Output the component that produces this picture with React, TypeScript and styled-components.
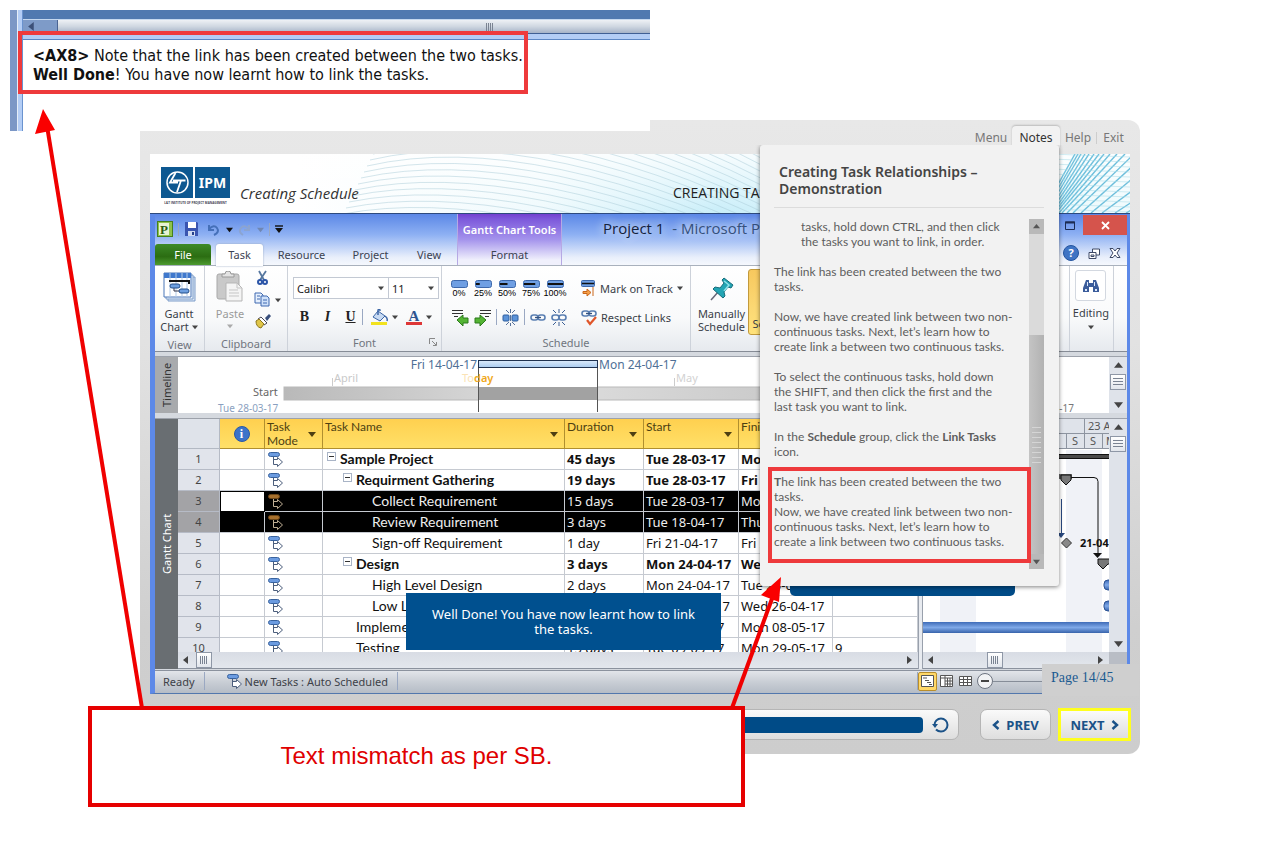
import React from "react";
import styled, { createGlobalStyle, css } from "styled-components";

const ui = '"Noto Sans", "Open Sans", sans-serif';
const office = 'Lato, "Open Sans", sans-serif';
const navy = "#004b87";

const Global = createGlobalStyle`
  *, *::before, *::after { box-sizing: border-box; }
  body { margin: 0; background: #fff; font-family: ${ui}; color: #333; }
  button, select, input { font: inherit; color: inherit; margin: 0; }
  button { border: 0; padding: 0; background: none; cursor: pointer; }
  p, h1, h2 { margin: 0; }
  svg { display: block; flex: none; }
`;

/* ---------- page and storyboard clip ---------- */

const Page = styled.main`
  position: relative;
  min-width: 1280px;
  padding: 10px 0 55px;
`;

const Clip = styled.section`
  position: relative;
  z-index: 1;
  width: 640px;
  height: 121px;
  margin-left: 10px;
  display: flex;
  background: #fff;
`;

const ClipEdge = styled.div`
  width: 13px;
  border-left: 7px solid #7b97c6;
  border-right: 1px solid #6a93cf;
  background: linear-gradient(90deg, #e4edf8 1px, #b3cdf5 1px);
`;

const ClipBody = styled.div`
  flex: 1;
  display: flex;
  flex-direction: column;
`;

const ClipTop = styled.div`
  height: 10px;
  background: #5079b0;
  border-bottom: 1px solid #c5d8ef;
`;

const ClipScroll = styled.div`
  height: 14px;
  display: flex;
  background: #7e9bc8;
  border-bottom: 1px solid #3f5f94;
`;

const ClipArrow = styled.div`
  width: 34px;
  display: flex;
  align-items: center;
  padding-left: 4px;
`;

const ClipThumb = styled.div`
  flex: 1;
  display: flex;
  align-items: center;
  padding-left: 427px;
  border-left: 1px solid #4a6493;
  background: linear-gradient(#eef1f5, #cfd7e1 50%, #a5b3c7);
`;

const ClipBand = styled.div`
  height: 6px;
  background: #b3cdf5;
  border-bottom: 1px solid #5b86c4;
`;

const ClipText = styled.p`
  padding: 6px 0 0 10px;
  font: 16px/19px "DejaVu Sans Condensed", "Noto Sans", sans-serif;
  color: #111;
  white-space: nowrap;
`;

/* ---------- player ---------- */

const Player = styled.section`
  position: relative;
  margin: -11px 140px 0;
  padding: 0 10px 13px;
  border-radius: 0 12px 12px 0;
  background: linear-gradient(#e8e8e8, #e2e2e2 35%, #cfcfcf 80%, #cdcdcd);
`;

const PlayerNav = styled.nav`
  height: 34px;
  padding-top: 6px;
  display: flex;
  justify-content: flex-end;
`;

const NavTab = styled.button<{ $w: number; $on?: boolean }>`
  height: 22px;
  padding: 2px 0 0;
  width: ${(p) => p.$w}px;
  font-size: 12px;
  line-height: 20px;
  color: ${(p) => (p.$on ? "#333" : "#777")};
  ${(p) =>
    p.$on &&
    css`
      border-radius: 4px 4px 0 0;
      background: #f2f2f2;
      box-shadow: 0 -1px 2px rgba(0, 0, 0, 0.2);
    `}
`;

const NavRule = styled.span`
  width: 1px;
  height: 12px;
  margin-top: 6px;
  background: #cdcdcd;
`;

const Banner = styled.header`
  display: grid;
  height: 60px;
  background: #fff;
  border-bottom: 1px solid #2d4a7e;
  > * {
    grid-area: 1 / 1;
  }
`;

const BannerRow = styled.div`
  display: flex;
  align-items: flex-start;
  padding: 13px 0 0 11px;
`;

const CourseName = styled.p`
  width: 443px;
  padding: 16px 0 0 10px;
  font: italic 15px/20px "Open Sans", sans-serif;
  color: #333;
  white-space: nowrap;
`;

const TopicName = styled.p`
  padding-top: 16px;
  font: 14px/20px "Open Sans", sans-serif;
  color: #222;
  white-space: nowrap;
`;

/* ---------- application window ---------- */

const AppWindow = styled.section`
  border: solid #5d89e8;
  border-width: 0 3px 0 5px;
  font-size: 11px;
  background: #d5d9df;
  border-bottom: 1px solid #5277ad;
`;

const Caption = styled.div`
  display: flex;
  height: 52px;
  background: linear-gradient(#5b87e6, #8db0f3 40%, #e9effb 85%, #f5f8fd);
  border-bottom: 1px solid #a9b1bd;
`;

const CaptionLeft = styled.div`
  width: 302px;
`;

const QuickBar = styled.div`
  display: flex;
  align-items: center;
  gap: 5px;
  height: 30px;
  padding-left: 2px;
`;

const VRule = styled.span<{ $h: number }>`
  width: 1px;
  flex: none;
  height: ${(p) => p.$h}px;
  background: #9aa8c2;
`;

const TabRow = styled.div`
  display: flex;
  height: 22px;
`;

const RibbonTab = styled.button<{ $w: number; $kind?: "file" | "open" }>`
  width: ${(p) => p.$w}px;
  height: 21px;
  padding-bottom: 1px;
  font-size: 11px;
  color: #3c4352;
  ${(p) =>
    p.$kind === "file" &&
    css`
      margin-right: 5px;
      color: #fff;
      border-radius: 3px 3px 0 0;
      background: linear-gradient(#3d8a28, #2b6d12 60%, #4d9a30);
    `}
  ${(p) =>
    p.$kind === "open" &&
    css`
      border-radius: 3px 3px 0 0;
      height: 22px;
      padding-bottom: 2px;
      background: #fff;
      box-shadow: 0 0 2px #8b9cbc;
    `}
`;

const ToolTabs = styled.div`
  width: 105px;
  display: flex;
  flex-direction: column;
  border: solid #b6a9e4;
  border-width: 0 1px;
  background: linear-gradient(#7340d0, #7d59db 10%, #a493ec 50%, #f0f0fc 90%);
`;

const ToolTitle = styled.span`
  height: 30px;
  padding-top: 1px;
  font: 600 11px/30px ${ui};
  color: #fff;
  text-align: center;
  white-space: nowrap;
`;

const DocTitle = styled.h1`
  flex: 1;
  padding-left: 41px;
  font: 15px/28px "Open Sans", sans-serif;
  color: #35507c;
  white-space: nowrap;
  text-shadow: 0 0 8px #e3edff, 0 0 12px #e3edff;
  b {
    font-weight: 400;
    color: #14223c;
  }
`;

const WinControls = styled.div`
  display: flex;
  flex-direction: column;
  align-items: flex-end;
`;

const WinRow = styled.div<{ $gap: number; $pad: number }>`
  display: flex;
  align-items: center;
  gap: ${(p) => p.$gap}px;
  padding-right: ${(p) => p.$pad}px;
  margin-top: 1px;
`;

const CloseBtn = styled.button`
  width: 44px;
  height: 20px;
  display: grid;
  place-items: center;
  background: #d5544c;
`;

const HelpBtn = styled.button`
  width: 16px;
  height: 16px;
  margin-top: 9px;
  border-radius: 50%;
  font: 700 11px/14px "Open Sans", sans-serif;
  color: #fff;
  background: #3f74c4;
  border: 1px solid #24559f;
`;

const GlyphBtn = styled.button`
  margin-top: 9px;
`;

/* ---------- ribbon ---------- */

const Ribbon = styled.div`
  display: flex;
  height: 86px;
  padding-right: 13px;
  background: linear-gradient(#fff, #f9fafb 60%, #e6e9ee);
  border-bottom: 1px solid #868c96;
`;

const Group = styled.div<{ $w?: number }>`
  ${(p) => (p.$w ? `width: ${p.$w}px;` : "flex: 1;")}
  display: flex;
  flex-direction: column;
  border-right: 1px solid #cdd2da;
  overflow: hidden;
`;

const GroupBody = styled.div<{ $pad?: string; $gap?: number }>`
  flex: 1;
  display: flex;
  gap: ${(p) => p.$gap ?? 0}px;
  padding: ${(p) => p.$pad ?? "4px 4px 0"};
`;

const GroupName = styled.div`
  height: 18px;
  display: grid;
  grid-template-columns: 12px 1fr 12px;
  align-items: center;
  text-align: center;
  color: #70757e;
`;

const BigButton = styled.button<{ $on?: boolean; $dim?: boolean; $w?: number }>`
  display: flex;
  flex-direction: column;
  align-items: center;
  width: ${(p) => p.$w ?? 42}px;
  height: 66px;
  flex: none;
  font-size: 11px;
  line-height: 13px;
  color: ${(p) => (p.$dim ? "#9a9a9a" : "#3a3f48")};
  border: 1px solid ${(p) => (p.$on ? "#c29a3c" : "transparent")};
  border-radius: 3px;
  background: ${(p) => (p.$on ? "linear-gradient(#f7c85e, #fbd874 60%, #ffe27a)" : "none")};
  span {
    margin-top: 5px;
  }
`;

const Column = styled.div<{ $gap?: number; $center?: boolean }>`
  display: flex;
  flex-direction: column;
  gap: ${(p) => p.$gap ?? 0}px;
  ${(p) => p.$center && "align-items: center;"}
`;

const Row = styled.div<{ $gap?: number; $h?: number }>`
  display: flex;
  align-items: center;
  gap: ${(p) => p.$gap ?? 0}px;
  ${(p) => p.$h && `height: ${p.$h}px;`}
`;

const Tool = styled.button`
  display: flex;
  align-items: center;
  gap: 4px;
  color: #3a3f48;
  white-space: nowrap;
`;

const PickWrap = styled.label<{ $w: number }>`
  width: ${(p) => p.$w}px;
  display: grid;
  align-items: center;
  margin-right: -1px;
  > * {
    grid-area: 1 / 1;
  }
  svg {
    justify-self: end;
    margin-right: 5px;
    pointer-events: none;
  }
`;

const Pick = styled.select`
  appearance: none;
  width: 100%;
  height: 22px;
  padding: 0 3px;
  border: 1px solid #c3c9d3;
  border-radius: 0;
  background: #fff;
  font-size: 11px;
  color: #222;
`;

const Letter = styled.button<{ $as: "b" | "i" | "u" }>`
  width: 23px;
  font: 700 14px/18px "Liberation Serif", serif;
  color: #222;
  font-style: ${(p) => (p.$as === "i" ? "italic" : "normal")};
  text-decoration: ${(p) => (p.$as === "u" ? "underline" : "none")};
`;

const Percent = styled.button`
  width: 24px;
  display: flex;
  flex-direction: column;
  align-items: center;
  font: 9px/8px "Liberation Sans", sans-serif;
  color: #000;
`;

const FindBtn = styled.button`
  width: 31px;
  height: 31px;
  display: grid;
  place-items: center;
  border: 1px solid #d3d8e0;
  border-radius: 3px;
  background: #fff;
`;

const Editing = styled.button`
  display: flex;
  flex-direction: column;
  align-items: center;
  gap: 4px;
  font-size: 11px;
  line-height: 15px;
  color: #3a3f48;
`;

/* ---------- timeline and grid ---------- */

const Pane = styled.div<{ $h: number; $top: number }>`
  display: flex;
  height: ${(p) => p.$h}px;
  margin-top: ${(p) => p.$top}px;
  border-top: 1px solid #9da2ab;
  background: #fff;
  overflow: hidden;
`;

const SideLabel = styled.div<{ $dark?: boolean }>`
  width: 23px;
  display: grid;
  place-items: center;
  writing-mode: vertical-rl;
  transform: rotate(180deg);
  font-size: 11px;
  color: ${(p) => (p.$dark ? "#fff" : "#333")};
  background: ${(p) => (p.$dark ? "#696e72" : "#a8aaad")};
`;

const Fill = styled.div`
  flex: 1;
  min-width: 0;
  overflow: hidden;
`;

const VScroll = styled.div<{ $fill?: boolean }>`
  width: 18px;
  ${(p) => p.$fill && "flex: 1;"}
  display: flex;
  flex-direction: column;
  align-items: center;
  padding: 4px 0;
  background: #dfe3ea;
`;

const Grow = styled.span`
  flex: 1;
`;

const Thumb = styled.button<{ $vertical?: boolean }>`
  width: 16px;
  height: 16px;
  display: grid;
  place-items: center;
  border: 1px solid #8e97a6;
  background: linear-gradient(#fff, #e2e6ec);
  margin-top: ${(p) => (p.$vertical ? 4 : 0)}px;
  flex: none;
`;

const HScroll = styled.div<{ $gap: number }>`
  height: 17px;
  display: flex;
  align-items: center;
  padding: 0 5px 0 4px;
  background: linear-gradient(#d8dce4, #e3e7ed);
  border-bottom: 1px solid #8b929e;
  > ${Thumb} {
    margin-left: ${(p) => p.$gap}px;
  }
`;

const SheetPane = styled.div`
  width: 740px;
  display: flex;
  flex-direction: column;
`;

const SheetClip = styled.div`
  height: 233px;
  overflow: hidden;
`;

const Sheet = styled.table`
  width: 740px;
  table-layout: fixed;
  border-collapse: separate;
  border-spacing: 0;
  font: 14px/20px ${office};
  color: #111;
`;

const HeadCell = styled.th<{ $blank?: boolean }>`
  height: 30px;
  padding: 1px 3px 0 2px;
  vertical-align: top;
  text-align: left;
  font: 12px/14px ${office};
  color: #4d3f12;
  white-space: nowrap;
  overflow: hidden;
  border: solid #b08f2f;
  border-width: 0 1px 1px 0;
  background: linear-gradient(#ffd04f, #ffe068);
  ${(p) => p.$blank && "background: #dfe3ea; border-color: #b3b9c3;"}
`;

const HeadInner = styled.div`
  display: flex;
  justify-content: space-between;
  svg {
    margin: 10px 3px 0 0;
  }
`;

const InfoDot = styled.span`
  display: block;
  width: 16px;
  height: 16px;
  margin: 6px auto 0;
  border-radius: 50%;
  background: #3c73c9;
  border: 1px solid #2a59a6;
  font: 700 12px/14px "Liberation Serif", serif;
  color: #fff;
  text-align: center;
`;

const TaskRow = styled.tr<{ $bold?: boolean; $sel?: boolean }>`
  font-weight: ${(p) => (p.$bold ? 700 : 400)};
  color: ${(p) => (p.$sel ? "#eee" : "#111")};
  background: ${(p) => (p.$sel ? "#000" : "#fff")};
`;

const RowNo = styled.th<{ $sel?: boolean }>`
  height: 21px;
  padding: 0;
  font: 11px/18px ${ui};
  color: #444;
  background: ${(p) => (p.$sel ? "#a3a3a6" : "#e1e4eb")};
  border: solid #b6bbc6;
  border-width: 0 1px 1px 0;
`;

const Cell = styled.td<{ $indent?: number; $active?: boolean; $date?: boolean }>`
  height: 21px;
  padding: 0 0 0 ${(p) => (p.$indent ? p.$indent * 16 - 12 : 2)}px;
  line-height: 20px;
  white-space: nowrap;
  overflow: hidden;
  border: solid #c6cad1;
  border-width: 0 1px 1px 0;
  ${(p) => p.$date && `font-family: ${ui}; font-size: 13px;`}
  ${(p) => p.$active && "background: #fff; border: 1px solid #000;"}
`;

const NameBox = styled.div`
  display: flex;
  gap: 4px;
`;

const Toggle = styled.button`
  width: 9px;
  height: 9px;
  margin-top: 3px;
  flex: none;
  display: grid;
  place-items: center;
  border: 1px solid #a9b4c6;
  background: #fff;
`;

const Blank = styled.span`
  width: 9px;
  flex: none;
`;

const Splitter = styled.div`
  width: 5px;
  background: #e8ebf0;
  border: solid #99a0ac;
  border-width: 0 1px;
`;

const ChartPane = styled.div`
  flex: 1;
  min-width: 0;
  display: flex;
  flex-direction: column;
`;

const ChartArea = styled.div`
  height: 233px;
  overflow: hidden;
`;

const Corner = styled.div`
  width: 18px;
  height: 17px;
  background: #b9bdc5;
`;

const Status = styled.footer`
  display: flex;
  align-items: center;
  height: 23px;
  margin-top: 1px;
  padding: 0 0 2px 8px;
  color: #3d4148;
  border-top: 1px solid #8b929e;
  background: linear-gradient(#e2e5ea, #c9ced5 50%, #b5bcc6);
`;

const NewTasks = styled.span`
  display: flex;
  align-items: center;
  gap: 2px;
  padding-left: 12px;
`;

const ViewBtn = styled.button<{ $on?: boolean }>`
  width: 19px;
  height: 19px;
  display: grid;
  place-items: center;
  border-radius: 2px;
  border: 1px solid ${(p) => (p.$on ? "#b98e2b" : "transparent")};
  background: ${(p) => (p.$on ? "#ffd869" : "none")};
`;

const ZoomBtn = styled.button`
  width: 16px;
  height: 16px;
  margin-left: 2px;
  display: grid;
  place-items: center;
  border: 1px solid #6d7480;
  border-radius: 50%;
  background: #f2f3f5;
`;

const ZoomRange = styled.input`
  width: 110px;
  height: 16px;
  margin-right: 24px;
  appearance: none;
  background: linear-gradient(#868d98, #868d98) center / 100% 1px no-repeat;
`;

/* ---------- overlays inside the player ---------- */

const NotesPanel = styled.aside`
  position: absolute;
  top: 25px;
  right: 81px;
  z-index: 2;
  width: 299px;
  height: 441px;
  padding: 18px 15px 0 14px;
  background: #f2f2f2;
  border-radius: 3px;
  box-shadow: 0 1px 4px rgba(0, 0, 0, 0.5);
  clip-path: inset(0 -8px -8px -8px);
`;

const NotesTitle = styled.h2`
  padding: 0 5px 10px;
  margin-bottom: 11px;
  font: 600 14px/17px ${ui};
  color: #444;
  border-bottom: 1px solid #dcdcdc;
`;

const NotesScroll = styled.div`
  display: flex;
  height: 350px;
`;

const NotesText = styled.div`
  flex: 1;
  font: 12px/15px ${office};
  color: #5d5d5d;
  white-space: nowrap;
  p + p {
    margin-top: 15px;
  }
`;

const Indented = styled.p`
  padding-left: 27px;
`;

const NotesBar = styled.div`
  width: 15px;
  display: flex;
  flex-direction: column;
  background: #dadada;
`;

const NotesStep = styled.button`
  height: 15px;
  display: grid;
  place-items: center;
  background: #b9b9b9;
`;

const NotesThumb = styled.div`
  height: 219px;
  margin-top: auto;
  display: grid;
  place-items: center;
  background: linear-gradient(90deg, #c4c4c4, #b2b2b2);
`;

const HiddenTip = styled.div`
  position: absolute;
  z-index: 1;
  top: 456px;
  right: 125px;
  width: 225px;
  height: 20px;
  border-radius: 5px;
  background: ${navy};
`;

const Tip = styled.p`
  position: absolute;
  z-index: 1;
  top: 473px;
  left: 266px;
  width: 315px;
  padding: 14px 0 13px;
  font: 13px/15px ${ui};
  text-align: center;
  color: #fff;
  background: #00508f;
`;

const PageCount = styled.p`
  position: absolute;
  z-index: 1;
  top: 544px;
  right: 1px;
  width: 97px;
  height: 32px;
  padding-left: 9px;
  font: 14px/27px "Liberation Serif", serif;
  color: #1b5a91;
  background: #cfcfcf;
`;

/* ---------- player footer ---------- */

const Controls = styled.footer`
  display: flex;
  align-items: center;
  height: 33px;
  margin-top: 14px;
  gap: 21px;
`;

const box = css`
  height: 31px;
  border: 1px solid #b5b5b5;
  border-radius: 7px;
  background: linear-gradient(#fafafa, #dedede);
`;

const Seek = styled.div`
  ${box}
  flex: 1;
  display: flex;
  align-items: center;
  gap: 9px;
  padding: 0 8px;
`;

const SeekBar = styled.div`
  flex: 1;
  height: 16px;
  border-radius: 4px;
  background: ${navy};
`;

const StepBtn = styled.button<{ $mark?: boolean }>`
  ${box}
  width: 71px;
  display: flex;
  align-items: center;
  justify-content: center;
  gap: 6px;
  font: 700 13px/20px ${ui};
  color: #1b5288;
  ${(p) =>
    p.$mark &&
    css`
      height: 33px;
      width: 73px;
      margin: 0 -1px 0 -14px;
      border: 3px solid #ffff1e;
      border-radius: 0;
    `}
`;

/* ---------- reviewer's marks ---------- */

const Frame = styled.div<{ $place: "clip" | "notes" }>`
  position: absolute;
  z-index: 3;
  border: 4px solid #ee3a3c;
  pointer-events: none;
  ${(p) =>
    p.$place === "clip"
      ? "left: 8px; top: 21px; width: 510px; height: 63px;"
      : "left: 8px; top: 322px; width: 263px; height: 96px;"}
`;

const Remark = styled.p`
  position: relative;
  z-index: 4;
  width: 657px;
  margin: -48px 0 0 88px;
  padding: 31px 0 33px;
  border: 4px solid #e60000;
  background: #fff;
  font: 24px/29px "Liberation Sans", Arial, sans-serif;
  color: #e00000;
  text-align: center;
`;

const Arrows = styled.svg`
  position: absolute;
  z-index: 3;
  left: 0;
  top: 0;
  pointer-events: none;
`;

/* ---------- drawings ---------- */

const Tri = ({ dir = "down", size = 7, color = "#444" }: { dir?: "down" | "up" | "left" | "right"; size?: number; color?: string }) => {
  const d = { down: "M0 2h8L4 7z", up: "M0 6h8L4 1z", left: "M6 0v8L1 4z", right: "M2 0v8l5-4z" }[dir];
  return (
    <svg width={size} height={size} viewBox="0 0 8 8">
      <path d={d} fill={color} />
    </svg>
  );
};

const Grip = ({ turn }: { turn?: boolean }) => (
  <svg width="10" height="10" viewBox="0 0 10 10">
    <path d={turn ? "M0 1.500h10M0 4.500h10M0 7.500h10" : "M1.500 1v8M3.500 1v8M5.500 1v8M7.500 1v8"} stroke="#7a8392" />
  </svg>
);

const ModeIcon = ({ sel }: { sel?: boolean }) => (
  <svg width="17" height="17" viewBox="0 0 17 17">
    <rect x="1.500" y="1.500" width="11" height="4" rx="2" fill={sel ? "#a66f2c" : "#6b9be0"} stroke={sel ? "#6b4516" : "#38629e"} />
    <path d="M6.500 6v4.500M6.500 8.500h4V6.500l5 4.500-5 4.500V13.500h-4z" fill={sel ? "#000" : "#fff"} stroke={sel ? "#bfae94" : "#4c5e7c"} />
  </svg>
);

const Logo = () => (
  <svg width="69" height="40" viewBox="0 0 69 40">
    <rect width="32" height="31" fill="#0d5891" />
    <rect x="34" width="35" height="31" fill="#0d5891" />
    <circle cx="16.500" cy="15.500" r="10.500" fill="none" stroke="#fff" strokeWidth="1.500" />
    <path d="M14.500 6L9 15.500h8M12 13.500h12.500M20 13.500l-4 11.500" fill="none" stroke="#fff" strokeWidth="1.800" />
    <text x="51.500" y="21" textAnchor="middle" fontFamily="Noto Sans" fontWeight="700" fontSize="14" fill="#fff">IPM</text>
    <text x="34.500" y="37" textAnchor="middle" fontFamily="Open Sans" fontWeight="700" fontSize="3" fill="#445">L&amp;T INSTITUTE OF PROJECT MANAGEMENT</text>
  </svg>
);

const rays = [925, 928, 931, 935, 939, 944, 949, 954, 960, 967, 975, 984, 996, 1012, 1032, 1056, 1084];
const rayFeet = [892, 894, 896, 898, 900, 902, 904, 906, 909, 912, 917, 923, 931, 941, 952, 965, 976];

const Waves = () => (
  <svg width="100%" height="59" viewBox="0 0 980 59" preserveAspectRatio="none">
    <defs>
      <linearGradient id="sky">
        <stop offset=".15" stopColor="#fff" />
        <stop offset=".4" stopColor="#effafd" />
        <stop offset=".58" stopColor="#c9eef9" />
        <stop offset=".85" stopColor="#e4f8fc" />
        <stop offset="1" stopColor="#effbfd" />
      </linearGradient>
      <linearGradient id="haze" x1="0" y1="1" x2="0" y2="0">
        <stop offset="0" stopColor="#fff" stopOpacity="0" />
        <stop offset="1" stopColor="#fff" stopOpacity=".85" />
      </linearGradient>
    </defs>
    <rect width="980" height="59" fill="url(#sky)" />
    <rect width="980" height="59" fill="url(#haze)" />
    {Array.from({ length: 24 }, (_, i) => (
      <path key={i} d={`M${190 + i * 3} ${66 - i * 6}Q${350 + i * 4} ${36 - i * 7} ${640 + i * 2} ${150 - i * 5}`} fill="none" stroke="#a9ccd8" strokeOpacity=".5" />
    ))}
    {rays.map((x, i) => (
      <path key={i} d={`M${x} 0L${rayFeet[i]} 59`} stroke="#55b4d6" strokeOpacity=".85" strokeWidth="1.400" />
    ))}
    {Array.from({ length: 12 }, (_, i) => (
      <path key={i} d={`M900 ${i * 5}L980 ${i * 5 + 3}`} stroke="#a8dce8" strokeOpacity=".5" />
    ))}
  </svg>
);

const LinkGlyph = ({ broken, check }: { broken?: boolean; check?: boolean }) => (
  <svg width="16" height="17" viewBox="0 0 16 17">
    <g fill="none" stroke="#5a7fb2" strokeWidth="1.600">
      <rect x="1" y={check ? 2 : 6} width="7" height="5" rx="2.500" />
      <rect x="8" y={check ? 2 : 6} width="7" height="5" rx="2.500" />
    </g>
    {!broken && <path d={check ? "M5 4.500h6" : "M5 8.500h6"} stroke="#35527e" strokeWidth="1.300" />}
    {broken && <path d="M8 0v4M8 13v4M2 1l3 3M14 1l-3 3M2 16l3-3M14 16l-3-3" stroke="#3c5f94" />}
    {check && <path d="M6 11l3 4 6-7" fill="none" stroke="#e0562a" strokeWidth="2.200" />}
  </svg>
);

const SplitGlyph = () => (
  <svg width="17" height="17" viewBox="0 0 17 17">
    <rect x="1" y="6" width="6" height="6" rx="1" fill="#5c93d8" stroke="#2f5f9f" />
    <rect x="10" y="6" width="6" height="6" rx="1" fill="#5c93d8" stroke="#2f5f9f" />
    <path d="M8.500 0v4M8.500 14v3M4 1l3 3M13 1l-3 3M4 16l3-3M13 16l-3-3M8.500 6v6" stroke="#56719a" />
  </svg>
);

const IndentGlyph = ({ right }: { right?: boolean }) => (
  <svg width="17" height="17" viewBox="0 0 17 17">
    <g transform={right ? "matrix(-1 0 0 1 17 0)" : undefined}>
      <path d="M0 1.500h11M0 4.500h11M2 7.500h4" stroke="#333" strokeWidth="1.200" />
      <path d="M5 11l6-5v3h5v5h-5v3z" fill="#54b434" stroke="#2a7a1b" />
    </g>
  </svg>
);

const PinGlyph = () => (
  <svg width="26" height="26" viewBox="0 0 26 26">
    <path d="M2 24l8-9" stroke="#667" strokeWidth="1.500" />
    <path d="M15 2l9 7-2 3-3-1-4 5 1 4-2 2L4 13l2-2 5 1 4-5-2-3z" fill="#23a5b4" stroke="#176d7b" />
    <path d="M15 5l5 4-5 6" fill="none" stroke="#8fe3ea" strokeWidth="1.500" />
  </svg>
);

const GanttGlyph = () => (
  <svg width="33" height="30" viewBox="0 0 33 30">
    <path d="M5 5h27v24H5z" fill="#dce8f7" stroke="#7c9cc8" />
    <path d="M3 3h27v24H3z" fill="#eef5fd" stroke="#7c9cc8" />
    <path d="M1 1h27v24H1z" fill="#fff" stroke="#4a77b8" />
    <path d="M1 1h27v5H1z" fill="#3f78cd" />
    <path d="M7 1v24M13 1v24M19 1v24M24 1v24" stroke="#b3cbe8" />
    <path d="M6 9h20v3" fill="none" stroke="#111" strokeWidth="2" />
    <path d="M11 14v5h6" fill="none" stroke="#334" />
    <rect x="7" y="12" width="10" height="4" rx="2" fill="#6d9fe0" stroke="#234f8b" />
    <rect x="16" y="17" width="10" height="4" rx="2" fill="#6d9fe0" stroke="#234f8b" />
  </svg>
);

const PasteGlyph = () => (
  <svg width="28" height="31" viewBox="0 0 28 31">
    <rect x="1" y="3" width="22" height="25" rx="2" fill="#c9c9c9" stroke="#a9a9a9" />
    <path d="M6 6V3h3a3 3 0 016 0h3v3z" fill="#e3e3e3" stroke="#999" />
    <path d="M10 12h11l5 5v13H10z" fill="#f4f4f4" stroke="#b5b5b5" />
    <path d="M21 12v5h5M13 19h9M13 22h10M13 25h10" fill="none" stroke="#c5c5c5" />
  </svg>
);

const TimelineChart = () => (
  <svg width="100%" height="56">
    <defs>
      <linearGradient id="fade">
        <stop offset="0" stopColor="#b9b9b9" />
        <stop offset=".35" stopColor="#dedede" />
        <stop offset=".7" stopColor="#c8c8c8" />
      </linearGradient>
      <linearGradient id="cap" x1="0" x2="0" y1="0" y2="1">
        <stop offset="0" stopColor="#dcebfb" />
        <stop offset="1" stopColor="#a9cbef" />
      </linearGradient>
    </defs>
    <rect x="106" y="30" width="740" height="13" fill="url(#fade)" stroke="#b9b9b9" />
    <rect x="300" y="6" width="119" height="49" fill="#fff" />
    <rect x="300" y="30" width="119" height="13" fill="#a2a2a2" />
    <path d="M300.500 3v52M419.500 3v52" stroke="#555" />
    <rect x="300.500" y="3.500" width="119" height="7" fill="url(#cap)" stroke="#1f3250" />
    <g fontFamily="Noto Sans" fontSize="12">
      <text x="299" y="12" textAnchor="end" fill="#4f7096">Fri 14-04-17</text>
      <text x="421" y="12" fill="#4f7096">Mon 24-04-17</text>
      <text x="156" y="25" fontSize="11" fill="#c9c9c9">April</text>
      <text x="498" y="25" fontSize="11" fill="#d2d2d2">May</text>
      <text x="284" y="25" fontSize="11" fill="#fbe3b5">To<tspan fill="#f0a81c" fontWeight="600">day</tspan></text>
      <text x="75" y="39" fontSize="11" fill="#666">Start</text>
      <text x="40" y="55" fontSize="10" fill="#8a9fc0">Tue 28-03-17</text>
      <text x="896" y="55" fontSize="10" textAnchor="end" fill="#777">Mon 29-05-17</text>
    </g>
    <path d="M154.500 21v8M496.500 21v8" stroke="#ccc" />
  </svg>
);

const GanttChart = () => (
  <svg width="100%" height="233">
    <defs>
      <linearGradient id="bar" x1="0" x2="0" y1="0" y2="1">
        <stop offset="0" stopColor="#3f6cb8" />
        <stop offset=".5" stopColor="#7fa9e8" />
        <stop offset="1" stopColor="#3763ab" />
      </linearGradient>
    </defs>
    <rect width="100%" height="30" fill="#dfe3ea" />
    <path d="M0 14.500h400M0 29.500h400M161.500 0v30M143.500 15v15M179.500 15v15" stroke="#8d94a0" />
    <g fontFamily="Noto Sans" fontSize="11" fill="#555">
      <text x="165" y="11">23 Apr &#39;17</text>
      <text x="149" y="26">S</text>
      <text x="167" y="26">S</text>
      <text x="183" y="26">M</text>
    </g>
    <rect x="17" y="31" width="36" height="202" fill="#f0f2f7" />
    <rect x="143" y="31" width="36" height="202" fill="#f0f2f7" />
    <path d="M0 35.500h400v4H0z" fill="#4a4a4a" stroke="#111" />
    <path d="M80 55h69v5H80z" fill="#666" />
    <path d="M138 56h10v5l-5 5-5-5z" fill="#777" stroke="#111" />
    <path d="M148 58.500h23q4 0 4 4V135" fill="none" stroke="#111" />
    <path d="M170 134h9l-4.500 5z" fill="#111" />
    <path d="M138.500 80v34" stroke="#2a4a80" />
    <path d="M134 114h8l-4 5z" fill="#2a4a80" />
    <path d="M143.500 119l5 5-5 5-5-5z" fill="#888" stroke="#333" />
    <text x="157" y="128" fontFamily="Noto Sans" fontSize="11" fontWeight="700" fill="#111">21-04</text>
    <path d="M175 140h30v5h-20l-5 5-5-5z" fill="#777" stroke="#111" />
    <rect x="181" y="161" width="40" height="10" rx="4" fill="url(#bar)" stroke="#2c5394" />
    <rect x="181" y="182" width="40" height="10" rx="4" fill="url(#bar)" stroke="#2c5394" />
    <rect y="203" width="100%" height="11" fill="url(#bar)" />
  </svg>
);

/* ---------- data ---------- */

type Task = { name: string; level: number; dur: string; start: string; end: string; pred?: string; sum?: boolean; sel?: boolean };

const tasks: Task[] = [
  { name: "Sample Project", level: 1, dur: "45 days", start: "Tue 28-03-17", end: "Mon 29-05-17", sum: true },
  { name: "Requirment Gathering", level: 2, dur: "19 days", start: "Tue 28-03-17", end: "Fri 21-04-17", sum: true },
  { name: "Collect Requirement", level: 3, dur: "15 days", start: "Tue 28-03-17", end: "Mon 17-04-17", sel: true },
  { name: "Review Requirement", level: 3, dur: "3 days", start: "Tue 18-04-17", end: "Thu 20-04-17", sel: true },
  { name: "Sign-off Requirement", level: 3, dur: "1 day", start: "Fri 21-04-17", end: "Fri 21-04-17" },
  { name: "Design", level: 2, dur: "3 days", start: "Mon 24-04-17", end: "Wed 26-04-17", sum: true },
  { name: "High Level Design", level: 3, dur: "2 days", start: "Mon 24-04-17", end: "Tue 25-04-17" },
  { name: "Low Level Design", level: 3, dur: "3 days", start: "Mon 24-04-17", end: "Wed 26-04-17" },
  { name: "Implementation", level: 2, dur: "30 days", start: "Tue 28-03-17", end: "Mon 08-05-17" },
  { name: "Testing", level: 2, dur: "15 days", start: "Tue 09-05-17", end: "Mon 29-05-17", pred: "9" },
];

const colWidths = [42, 45, 58, 242, 79, 95, 94, 85];
const percents = [0, 25, 50, 75, 100];

/* ---------- parts ---------- */

const HeadLabel = ({ children }: { children: React.ReactNode }) => (
  <HeadCell scope="col">
    <HeadInner>
      <span>{children}</span>
      <Tri size={8} color="#4d3f12" />
    </HeadInner>
  </HeadCell>
);

const TaskSheet = () => (
  <Sheet>
    <colgroup>
      {colWidths.map((w, i) => (
        <col key={i} width={w} />
      ))}
    </colgroup>
    <thead>
      <tr>
        <HeadCell $blank />
        <HeadCell scope="col">
          <InfoDot>i</InfoDot>
        </HeadCell>
        <HeadLabel>
          Task
          <br />
          Mode
        </HeadLabel>
        <HeadLabel>Task Name</HeadLabel>
        <HeadLabel>Duration</HeadLabel>
        <HeadLabel>Start</HeadLabel>
        <HeadLabel>Finish</HeadLabel>
        <HeadLabel>Pred</HeadLabel>
      </tr>
    </thead>
    <tbody>
      {tasks.map((t, i) => (
        <TaskRow key={t.name} $bold={t.sum} $sel={t.sel}>
          <RowNo scope="row" $sel={t.sel}>
            {i + 1}
          </RowNo>
          <Cell $active={i === 2} />
          <Cell>
            <ModeIcon sel={t.sel} />
          </Cell>
          <Cell $indent={t.level}>
            <NameBox>
              {t.sum ? (
                <Toggle aria-label={`Collapse ${t.name}`}>
                  <svg width="5" height="1">
                    <rect width="5" height="1" fill="#333" />
                  </svg>
                </Toggle>
              ) : (
                <Blank />
              )}
              {t.name}
            </NameBox>
          </Cell>
          <Cell $date>{t.dur}</Cell>
          <Cell $date>{t.start}</Cell>
          <Cell $date>{t.end}</Cell>
          <Cell $date>{t.pred}</Cell>
        </TaskRow>
      ))}
    </tbody>
  </Sheet>
);

const TitleBar = () => (
  <Caption>
    <CaptionLeft>
      <QuickBar>
        <svg width="16" height="16" viewBox="0 0 16 16">
          <rect x=".5" y=".5" width="15" height="15" fill="#8fc24a" stroke="#46801c" />
          <rect x="2" y="2" width="10" height="12" fill="#e7f3d4" />
          <text x="3" y="13" fontFamily="Liberation Serif" fontWeight="700" fontSize="13" fill="#2c5d10">P</text>
        </svg>
        <VRule $h={13} />
        <svg width="15" height="14" viewBox="0 0 15 14">
          <path d="M1 0h12l1 1v13H1z" fill="#3a55b0" />
          <path d="M4 0h8v6H4z" fill="#fff" />
          <path d="M4 9h7v5H4z" fill="#cdd9f1" />
          <path d="M8 10h2v3H8z" fill="#26408b" />
        </svg>
        <svg width="17" height="13" viewBox="-2 0 17 13">
          <path d="M3 2v5h5M3 6q5-5 8-1t-3 7" fill="none" stroke="#4570b9" strokeWidth="2" />
        </svg>
        <Tri color="#111" />
        <svg width="14" height="13" viewBox="0 0 14 13">
          <path d="M11 2v5H6M11 6Q6 1 3 5t2 7" fill="none" stroke="#8ba4d1" strokeWidth="2" />
        </svg>
        <Tri color="#6f87b3" />
        <VRule $h={13} />
        <svg width="8" height="8" viewBox="0 0 8 8">
          <path d="M0 1h8" stroke="#111" strokeWidth="1.400" />
          <path d="M0 3h8L4 8z" fill="#111" />
        </svg>
      </QuickBar>
      <TabRow>
        <RibbonTab $w={56} $kind="file">File</RibbonTab>
        <RibbonTab $w={47} $kind="open">Task</RibbonTab>
        <RibbonTab $w={77}>Resource</RibbonTab>
        <RibbonTab $w={61}>Project</RibbonTab>
        <RibbonTab $w={56}>View</RibbonTab>
      </TabRow>
    </CaptionLeft>
    <ToolTabs>
      <ToolTitle>Gantt Chart Tools</ToolTitle>
      <RibbonTab $w={103}>Format</RibbonTab>
    </ToolTabs>
    <DocTitle>
      <b>Project 1</b>&nbsp; - Microsoft Project
    </DocTitle>
    <WinControls>
      <WinRow $gap={8} $pad={0}>
        <button aria-label="Maximize">
          <svg width="10" height="9" viewBox="0 0 10 9">
            <path d="M.500 1h9v7.500h-9z" fill="none" stroke="#1d2c52" />
            <path d="M0 1.500h10" stroke="#1d2c52" strokeWidth="2" />
          </svg>
        </button>
        <CloseBtn aria-label="Close">
          <svg width="9" height="9" viewBox="0 0 9 9">
            <path d="M1 1l7 7M8 1L1 8" stroke="#fff" strokeWidth="1.800" />
          </svg>
        </CloseBtn>
      </WinRow>
      <WinRow $gap={9} $pad={6}>
        <HelpBtn aria-label="Help">?</HelpBtn>
        <GlyphBtn aria-label="Restore">
          <svg width="12" height="11" viewBox="0 0 12 11">
            <path d="M4.500 4V1h7v6H8M1 4.500h7v6H1zM3 7h3v1.500H3z" fill="#fff" stroke="#3c4866" />
          </svg>
        </GlyphBtn>
        <GlyphBtn aria-label="Close document">
          <svg width="12" height="10" viewBox="0 0 12 10">
            <path d="M1 .500h3l2 2.500 2-2.500h3L8 5l3 4.500H8L6 7 4 9.500H1L4 5z" fill="#fff" stroke="#3c4866" />
          </svg>
        </GlyphBtn>
      </WinRow>
    </WinControls>
  </Caption>
);

const RibbonBar = () => (
  <Ribbon>
    <Group $w={50}>
      <GroupBody $pad="5px 3px 0">
        <BigButton>
          <GanttGlyph />
          <span>Gantt</span>
          <Row $gap={3}>
            Chart <Tri size={6} />
          </Row>
        </BigButton>
      </GroupBody>
      <GroupName><i />View</GroupName>
    </Group>
    <Group $w={83}>
      <GroupBody $pad="4px 4px 0">
        <BigButton $dim>
          <PasteGlyph />
          <Column $gap={3} $center>
            <span>Paste</span>
            <Tri size={6} color="#aaa" />
          </Column>
        </BigButton>
        <Column $gap={6}>
          <Tool aria-label="Cut">
            <svg width="24" height="16" viewBox="0 0 24 16">
              <path d="M8 1l5 9M15 1L9 10" stroke="#56779f" strokeWidth="1.800" />
              <circle cx="9" cy="12" r="2" fill="none" stroke="#2b55a8" strokeWidth="2" />
              <circle cx="14" cy="12" r="2" fill="none" stroke="#2b55a8" strokeWidth="2" />
            </svg>
          </Tool>
          <Tool aria-label="Copy">
            <svg width="20" height="15" viewBox="1 0 20 15">
              <path d="M5 1h6l2 2v8H5z" fill="#e6f0fd" stroke="#3f69b0" />
              <path d="M11 4h6l2 2v8h-8z" fill="#cfe1fa" stroke="#3f69b0" />
              <path d="M7 4h3M7 7h3M13 8h4M13 11h4" stroke="#3f69b0" />
            </svg>
            <Tri size={6} />
          </Tool>
          <Tool aria-label="Format painter">
            <svg width="22" height="16" viewBox="0 0 22 16">
              <path d="M14 5l4-4 2 2-4 5z" fill="#394f7d" />
              <path d="M10 4l6 6-3 2-6-6z" fill="#fff" stroke="#445" />
              <path d="M5 8l3-2 5 5-3 4q-5-1-5-7z" fill="#e0c648" stroke="#8c761c" />
            </svg>
          </Tool>
        </Column>
      </GroupBody>
      <GroupName><i />Clipboard</GroupName>
    </Group>
    <Group $w={154}>
      <GroupBody $pad="11px 4px 0 5px">
        <Column $gap={9}>
          <Row>
            <PickWrap $w={96}>
              <Pick aria-label="Font" defaultValue="Calibri">
                <option>Calibri</option>
              </Pick>
              <Tri size={6} />
            </PickWrap>
            <PickWrap $w={51}>
              <Pick aria-label="Font size" defaultValue="11">
                <option>11</option>
              </Pick>
              <Tri size={6} />
            </PickWrap>
          </Row>
          <Row>
            <Letter $as="b">B</Letter>
            <Letter $as="i">I</Letter>
            <Letter $as="u">U</Letter>
            <Row $gap={8}>
              <VRule $h={16} />
              <Tool aria-label="Fill colour">
                <svg width="17" height="17" viewBox="0 0 17 17">
                  <path d="M7 2l7 5-5 5-7-4z" fill="#c7daf3" stroke="#3c66a6" />
                  <path d="M7 6V1q2-2 2 1M14 7q3 2 2 5" fill="none" stroke="#3c66a6" strokeWidth="1.500" />
                  <path d="M0 13h16v3H0z" fill="#f2e21e" />
                </svg>
                <Tri size={6} />
              </Tool>
              <Tool aria-label="Text colour">
                <svg width="16" height="17" viewBox="0 0 16 17">
                  <text x="8" y="12" textAnchor="middle" fontFamily="Liberation Serif" fontWeight="700" fontSize="15" fill="#2f5590">A</text>
                  <path d="M0 13h16v3H0z" fill="#de3737" />
                </svg>
                <Tri size={6} />
              </Tool>
            </Row>
          </Row>
        </Column>
      </GroupBody>
      <GroupName>
        <i />Font
        <svg width="8" height="8" viewBox="0 0 8 8">
          <path d="M.500 6V.500H6M3 3l4 4M7.500 4v3.500H4" fill="none" stroke="#888" />
        </svg>
      </GroupName>
    </Group>
    <Group $w={249}>
      <GroupBody $pad="11px 0 0 5px" $gap={14}>
        <Column $gap={9}>
          <Row $h={22}>
            {percents.map((p) => (
              <Percent key={p}>
                <svg width="17" height="9" viewBox="0 0 17 9">
                  <rect x=".5" y=".5" width="16" height="7" rx="2" fill="#6f9fe3" stroke="#3d68ab" />
                  <rect x="1" y="3" width={(p * 15) / 100} height="2" fill="#111" />
                </svg>
                {p}%
              </Percent>
            ))}
          </Row>
          <Row $gap={5} $h={18}>
            <i />
            <Tool aria-label="Outdent"><IndentGlyph /></Tool>
            <Tool aria-label="Indent"><IndentGlyph right /></Tool>
            <VRule $h={16} />
            <Tool aria-label="Split task"><SplitGlyph /></Tool>
            <VRule $h={16} />
            <Tool aria-label="Link tasks"><LinkGlyph /></Tool>
            <Tool aria-label="Unlink tasks"><LinkGlyph broken /></Tool>
          </Row>
        </Column>
        <Column $gap={9}>
          <Row $h={22}>
            <Tool>
              <svg width="15" height="17" viewBox="0 0 15 17">
                <rect x=".5" y=".5" width="13" height="6" rx="1" fill="#6f9fe3" stroke="#3d68ab" />
                <path d="M1 3.500h12" stroke="#111" strokeWidth="1.500" />
                <path d="M12 7v9M2 11.500h4V9l4 3.500-4 3.500v-2.500H2z" fill="#f5a04a" stroke="#c9661a" />
              </svg>
              Mark on Track
              <Tri size={6} />
            </Tool>
          </Row>
          <Row $h={18}>
            <Tool>
              <LinkGlyph check />
              Respect Links
            </Tool>
          </Row>
        </Column>
      </GroupBody>
      <GroupName><i />Schedule</GroupName>
    </Group>
    <Group>
      <GroupBody $pad="3px 0 0 4px">
        <BigButton $w={53}>
          <Column $gap={6}>
            <i />
            <PinGlyph />
          </Column>
          <span>Manually</span>
          Schedule
        </BigButton>
        <BigButton $w={56} $on>
          <Column $gap={6}>
            <i />
            <ModeIcon />
            <i />
          </Column>
          <span>Auto</span>
          Schedule
        </BigButton>
      </GroupBody>
      <GroupName><i />Tasks</GroupName>
    </Group>
    <Group $w={44}>
      <GroupBody $pad="4px 0 0">
        <Column $gap={4} $center>
          <FindBtn aria-label="Find">
            <svg width="16" height="14" viewBox="0 0 16 14">
              <path d="M3 1h3v3h4V1h3l3 8v4h-6V8H6v5H0V9z" fill="#3b5c9b" />
              <path d="M2 10h2v2H2zM12 10h2v2h-2zM4 3h1v4H4zM11 3h1v4h-1z" fill="#dbe7fa" />
            </svg>
          </FindBtn>
          <Editing>
            &nbsp;Editing&nbsp;
            <Tri size={6} />
          </Editing>
        </Column>
      </GroupBody>
    </Group>
  </Ribbon>
);

const Notes = () => (
  <NotesPanel>
    <NotesTitle>
      Creating Task Relationships –<br />
      Demonstration
    </NotesTitle>
    <NotesScroll>
      <NotesText>
        <Indented>
          tasks, hold down CTRL, and then click
          <br />
          the tasks you want to link, in order.
        </Indented>
        <p>
          The link has been created between the two
          <br />
          tasks.
        </p>
        <p>
          Now, we have created link between two non-
          <br />
          continuous tasks. Next, let’s learn how to
          <br />
          create link a between two continuous tasks.
        </p>
        <p>
          To select the continuous tasks, hold down
          <br />
          the SHIFT, and then click the first and the
          <br />
          last task you want to link.
        </p>
        <p>
          In the <b>Schedule</b> group, click the <b>Link Tasks</b>
          <br />
          icon.
        </p>
        <p>
          <b>T</b>he link has been created between the two
          <br />
          tasks.
          <br />
          Now, we have created link between two non-
          <br />
          continuous tasks. Next, let’s learn how to
          <br />
          create a link between two continuous tasks.
        </p>
      </NotesText>
      <NotesBar>
        <NotesStep aria-label="Scroll up"><Tri dir="up" color="#555" /></NotesStep>
        <NotesThumb>
          <svg width="9" height="38" viewBox="0 0 9 38">
            <path d="M0 1.500h9M0 6.500h9M0 11.500h9M0 16.500h9M0 21.500h9M0 26.500h9M0 31.500h9M0 36.500h9" stroke="#d5d5d5" />
          </svg>
        </NotesThumb>
        <NotesStep aria-label="Scroll down"><Tri color="#555" /></NotesStep>
      </NotesBar>
    </NotesScroll>
    <Frame $place="notes" />
  </NotesPanel>
);

export default function App() {
  return (
    <Page>
      <Global />
      <Clip>
        <ClipEdge />
        <ClipBody>
          <ClipTop />
          <ClipScroll>
            <ClipArrow>
              <Tri dir="left" size={9} color="#3c5078" />
            </ClipArrow>
            <ClipThumb>
              <Grip />
            </ClipThumb>
          </ClipScroll>
          <ClipBand />
          <ClipText>
            <b>&lt;AX8&gt;</b> Note that the link has been created between the two tasks.
            <br />
            <b>Well Done</b>! You have now learnt how to link the tasks.
          </ClipText>
        </ClipBody>
        <Frame $place="clip" />
      </Clip>

      <Player>
        <PlayerNav>
          <NavTab $w={42}>Menu</NavTab>
          <NavTab $w={48} $on>Notes</NavTab>
          <NavTab $w={36}>Help</NavTab>
          <NavRule />
          <NavTab $w={33}>Exit</NavTab>
        </PlayerNav>
        <Banner>
          <Waves />
          <BannerRow>
            <Logo />
            <CourseName>Creating Schedule</CourseName>
            <TopicName>CREATING TASK RELATIONSHIPS</TopicName>
          </BannerRow>
        </Banner>

        <AppWindow>
          <TitleBar />
          <RibbonBar />
          <Pane $h={57} $top={4}>
            <SideLabel>Timeline</SideLabel>
            <Fill>
              <TimelineChart />
            </Fill>
            <VScroll>
              <Tri dir="up" size={9} />
              <Thumb $vertical aria-label="Timeline scroll"><Grip turn /></Thumb>
              <Grow />
              <Tri size={9} />
            </VScroll>
          </Pane>
          <Pane $h={251} $top={5}>
            <SideLabel $dark>Gantt Chart</SideLabel>
            <SheetPane>
              <SheetClip>
                <TaskSheet />
              </SheetClip>
              <HScroll $gap={6}>
                <Tri dir="left" size={8} />
                <Thumb aria-label="Sheet scroll"><Grip /></Thumb>
                <Grow />
                <Tri dir="right" size={8} />
              </HScroll>
            </SheetPane>
            <Splitter />
            <ChartPane>
              <ChartArea>
                <GanttChart />
              </ChartArea>
              <HScroll $gap={52}>
                <Tri dir="left" size={8} />
                <Thumb aria-label="Chart scroll"><Grip /></Thumb>
                <Grow />
                <Tri dir="right" size={8} />
              </HScroll>
            </ChartPane>
            <Column>
              <VScroll $fill>
                <Tri dir="up" size={9} />
                <Thumb $vertical aria-label="Grid scroll"><Grip turn /></Thumb>
                <Grow />
                <Tri size={9} />
              </VScroll>
              <Corner />
            </Column>
          </Pane>
          <Status>
            <Row $gap={9} $h={20}>
              Ready
              <VRule $h={18} />
              <NewTasks>
                <ModeIcon />
                New Tasks : Auto Scheduled
              </NewTasks>
              <VRule $h={18} />
            </Row>
            <Grow />
            <Row $h={20}>
              <VRule $h={18} />
              <ViewBtn $on aria-label="Gantt view">
                <svg width="13" height="12" viewBox="0 0 13 12">
                  <path d="M.500.500h12v11H.500zM2 3h4M4 5.500h4M6 7.500h4M8 9.500h3" fill="#fff" stroke="#555" />
                </svg>
              </ViewBtn>
              <ViewBtn aria-label="Task usage">
                <svg width="13" height="12" viewBox="0 0 13 12">
                  <path d="M.500.500h12v11H.500zM1 3h12M5 1v11M7.500 3v9M10 3v9M5 6h8M5 9h8" fill="#fff" stroke="#555" />
                </svg>
              </ViewBtn>
              <ViewBtn aria-label="Team planner">
                <svg width="13" height="11" viewBox="0 0 13 11">
                  <path d="M.500.500h12v9H.500zM1 3.500h12M1 6.500h12M4.500 1v9M8.500 1v9" fill="#fff" stroke="#555" />
                </svg>
              </ViewBtn>
              <ZoomBtn aria-label="Zoom out">
                <svg width="8" height="2"><rect width="8" height="2" fill="#444" /></svg>
              </ZoomBtn>
              <ZoomRange type="range" aria-label="Zoom" defaultValue={75} />
            </Row>
          </Status>
        </AppWindow>

        <Controls>
          <Seek>
            <SeekBar />
            <button aria-label="Replay">
              <svg width="18" height="18" viewBox="0 0 18 18">
                <path d="M2.500 9A6.500 6.500 0 119 15.500q-3 0-5-2" fill="none" stroke="#1b5288" strokeWidth="2" />
                <path d="M0 8h6L3 12z" fill="#1b5288" />
              </svg>
            </button>
          </Seek>
          <StepBtn>
            <svg width="8" height="10" viewBox="0 0 8 10"><path d="M6.500 1L2 5l4.500 4" fill="none" stroke="#1b5288" strokeWidth="2.400" /></svg>
            PREV
          </StepBtn>
          <StepBtn $mark>
            NEXT
            <svg width="8" height="10" viewBox="0 0 8 10"><path d="M1.500 1L6 5 1.500 9" fill="none" stroke="#1b5288" strokeWidth="2.400" /></svg>
          </StepBtn>
        </Controls>

        <HiddenTip />
        <Tip>
          Well Done! You have now learnt how to link
          <br />
          the tasks.
        </Tip>
        <Notes />
        <PageCount>Page 14/45</PageCount>
      </Player>

      <Remark>Text mismatch as per SB.</Remark>
      <Arrows width="800" height="720" viewBox="0 0 800 720">
        <g stroke="#f00000" strokeWidth="4">
          <path d="M142 708L47 126" />
          <path d="M732 708L773 596" />
        </g>
        <path d="M43 109l12 21-20 4zM781 577l-2 25-18-7z" fill="#fa0000" />
      </Arrows>
    </Page>
  );
}
